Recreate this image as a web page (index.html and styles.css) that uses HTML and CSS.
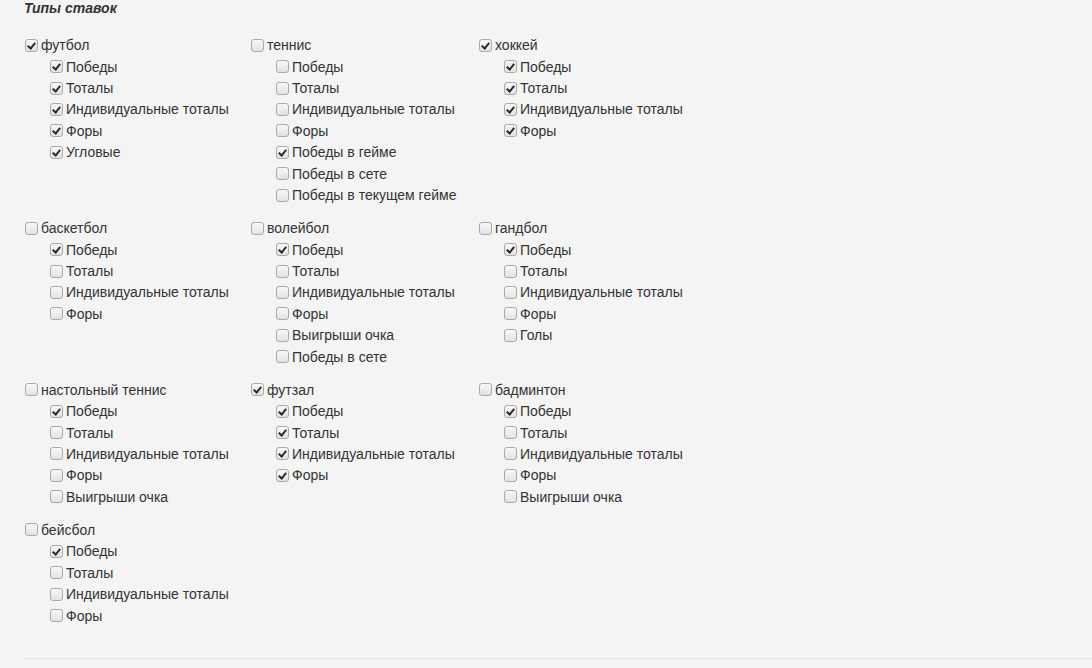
FILE: index.html
```html
<!DOCTYPE html>
<html lang="ru">
<head>
<meta charset="utf-8">
<link rel="stylesheet" href="styles.css">
</head>
<body>
<div class="page">
  <h4 class="title">Типы ставок</h4>
  <div class="grid">
    <div class="group">
      <label class="row main"><input type="checkbox" checked><span>футбол</span></label>
      <label class="row sub"><input type="checkbox" checked><span>Победы</span></label>
      <label class="row sub"><input type="checkbox" checked><span>Тоталы</span></label>
      <label class="row sub"><input type="checkbox" checked><span>Индивидуальные тоталы</span></label>
      <label class="row sub"><input type="checkbox" checked><span>Форы</span></label>
      <label class="row sub"><input type="checkbox" checked><span>Угловые</span></label>
    </div>
    <div class="group">
      <label class="row main"><input type="checkbox"><span>теннис</span></label>
      <label class="row sub"><input type="checkbox"><span>Победы</span></label>
      <label class="row sub"><input type="checkbox"><span>Тоталы</span></label>
      <label class="row sub"><input type="checkbox"><span>Индивидуальные тоталы</span></label>
      <label class="row sub"><input type="checkbox"><span>Форы</span></label>
      <label class="row sub"><input type="checkbox" checked><span>Победы в гейме</span></label>
      <label class="row sub"><input type="checkbox"><span>Победы в сете</span></label>
      <label class="row sub"><input type="checkbox"><span>Победы в текущем гейме</span></label>
    </div>
    <div class="group">
      <label class="row main"><input type="checkbox" checked><span>хоккей</span></label>
      <label class="row sub"><input type="checkbox" checked><span>Победы</span></label>
      <label class="row sub"><input type="checkbox" checked><span>Тоталы</span></label>
      <label class="row sub"><input type="checkbox" checked><span>Индивидуальные тоталы</span></label>
      <label class="row sub"><input type="checkbox" checked><span>Форы</span></label>
    </div>

    <div class="group">
      <label class="row main"><input type="checkbox"><span>баскетбол</span></label>
      <label class="row sub"><input type="checkbox" checked><span>Победы</span></label>
      <label class="row sub"><input type="checkbox"><span>Тоталы</span></label>
      <label class="row sub"><input type="checkbox"><span>Индивидуальные тоталы</span></label>
      <label class="row sub"><input type="checkbox"><span>Форы</span></label>
    </div>
    <div class="group">
      <label class="row main"><input type="checkbox"><span>волейбол</span></label>
      <label class="row sub"><input type="checkbox" checked><span>Победы</span></label>
      <label class="row sub"><input type="checkbox"><span>Тоталы</span></label>
      <label class="row sub"><input type="checkbox"><span>Индивидуальные тоталы</span></label>
      <label class="row sub"><input type="checkbox"><span>Форы</span></label>
      <label class="row sub"><input type="checkbox"><span>Выигрыши очка</span></label>
      <label class="row sub"><input type="checkbox"><span>Победы в сете</span></label>
    </div>
    <div class="group">
      <label class="row main"><input type="checkbox"><span>гандбол</span></label>
      <label class="row sub"><input type="checkbox" checked><span>Победы</span></label>
      <label class="row sub"><input type="checkbox"><span>Тоталы</span></label>
      <label class="row sub"><input type="checkbox"><span>Индивидуальные тоталы</span></label>
      <label class="row sub"><input type="checkbox"><span>Форы</span></label>
      <label class="row sub"><input type="checkbox"><span>Голы</span></label>
    </div>

    <div class="group">
      <label class="row main"><input type="checkbox"><span>настольный теннис</span></label>
      <label class="row sub"><input type="checkbox" checked><span>Победы</span></label>
      <label class="row sub"><input type="checkbox"><span>Тоталы</span></label>
      <label class="row sub"><input type="checkbox"><span>Индивидуальные тоталы</span></label>
      <label class="row sub"><input type="checkbox"><span>Форы</span></label>
      <label class="row sub"><input type="checkbox"><span>Выигрыши очка</span></label>
    </div>
    <div class="group">
      <label class="row main"><input type="checkbox" checked><span>футзал</span></label>
      <label class="row sub"><input type="checkbox" checked><span>Победы</span></label>
      <label class="row sub"><input type="checkbox" checked><span>Тоталы</span></label>
      <label class="row sub"><input type="checkbox" checked><span>Индивидуальные тоталы</span></label>
      <label class="row sub"><input type="checkbox" checked><span>Форы</span></label>
    </div>
    <div class="group">
      <label class="row main"><input type="checkbox"><span>бадминтон</span></label>
      <label class="row sub"><input type="checkbox" checked><span>Победы</span></label>
      <label class="row sub"><input type="checkbox"><span>Тоталы</span></label>
      <label class="row sub"><input type="checkbox"><span>Индивидуальные тоталы</span></label>
      <label class="row sub"><input type="checkbox"><span>Форы</span></label>
      <label class="row sub"><input type="checkbox"><span>Выигрыши очка</span></label>
    </div>

    <div class="group">
      <label class="row main"><input type="checkbox"><span>бейсбол</span></label>
      <label class="row sub"><input type="checkbox" checked><span>Победы</span></label>
      <label class="row sub"><input type="checkbox"><span>Тоталы</span></label>
      <label class="row sub"><input type="checkbox"><span>Индивидуальные тоталы</span></label>
      <label class="row sub"><input type="checkbox"><span>Форы</span></label>
    </div>
  </div>
  <hr class="divider">
</div>
</body>
</html>
```

FILE: styles.css
```css
html, body {
  margin: 0;
  padding: 0;
  background: #f4f4f4;
}

body {
  font-family: "Liberation Sans", Arial, sans-serif;
  font-size: 14px;
  color: #333;
}

.page {
  padding-left: 24px;
}

.title {
  margin: 0;
  height: 34.5px;
  font-size: 14px;
  line-height: 17px;
  font-weight: bold;
  font-style: italic;
  color: #333;
}

.grid {
  display: grid;
  grid-template-columns: 226px 228px 228px;
  align-items: start;
}

.group {
  display: flex;
  flex-direction: column;
  margin-bottom: 11.6px;
}

.row {
  display: flex;
  align-items: center;
  height: 21.43px;
  white-space: nowrap;
  cursor: pointer;
}

.row.sub {
  padding-left: 25px;
}

.row input {
  appearance: none;
  -webkit-appearance: none;
  box-sizing: border-box;
  width: 13px;
  height: 13px;
  margin: 0 3px 0 1px;
  border: 1px solid #a9a9a9;
  border-radius: 3px;
  background: linear-gradient(#f8f8f8, #e2e2e2);
  position: relative;
  flex: none;
}

.row input:checked::after {
  content: "";
  position: absolute;
  left: 3px;
  top: 1px;
  width: 3px;
  height: 6px;
  border-right: 2px solid #2b2b2b;
  border-bottom: 2px solid #2b2b2b;
  transform: rotate(40deg);
}

.divider {
  margin: 20px 0 0 0;
  border: 0;
  border-top: 1px solid #e2e2e2;
  height: 0;
}
```
